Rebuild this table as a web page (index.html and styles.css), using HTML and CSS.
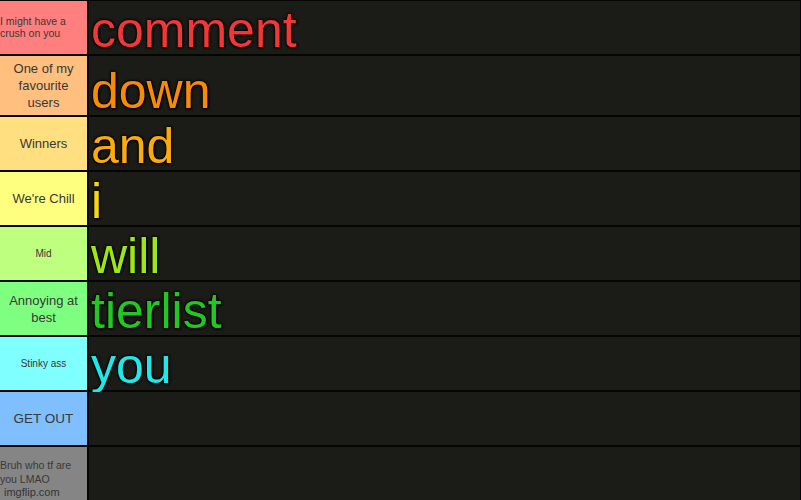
FILE: index.html
```html
<!DOCTYPE html>
<html>
<head>
<meta charset="utf-8">
<link rel="stylesheet" href="styles.css">
</head>
<body>
<div class="board">
  <div class="tier">
    <div class="label left t-s c1">I might have a crush on you</div>
    <div class="items"><span class="word w1">comment</span></div>
  </div>
  <div class="tier tall">
    <div class="label c2">One of my favourite users</div>
    <div class="items"><span class="word w2">down</span></div>
  </div>
  <div class="tier">
    <div class="label c3">Winners</div>
    <div class="items"><span class="word w3">and</span></div>
  </div>
  <div class="tier">
    <div class="label c4">We're Chill</div>
    <div class="items"><span class="word w4">i</span></div>
  </div>
  <div class="tier">
    <div class="label t-xs c5">Mid</div>
    <div class="items"><span class="word w5">will</span></div>
  </div>
  <div class="tier">
    <div class="label c6">Annoying at best</div>
    <div class="items"><span class="word w6">tierlist</span></div>
  </div>
  <div class="tier">
    <div class="label t-xs c7">Stinky ass</div>
    <div class="items"><span class="word w7">you</span></div>
  </div>
  <div class="tier">
    <div class="label t-l c8">GET OUT</div>
    <div class="items"></div>
  </div>
  <div class="tier">
    <div class="label left t-b c9">Bruh who tf are you LMAO</div>
    <div class="items"></div>
  </div>
  <div class="watermark">imgflip.com</div>
</div>
</body>
</html>
```

FILE: styles.css
```css
html, body {
  margin: 0;
  padding: 0;
  background: #000;
}

.board {
  position: relative;
  width: 801px;
  height: 500px;
  box-sizing: border-box;
  padding: 1px 1px 0 0;
  display: flex;
  flex-direction: column;
  gap: 2px;
  background: #050505;
  font-family: "Liberation Sans", Arial, sans-serif;
  overflow: hidden;
}

.tier {
  display: flex;
  gap: 2px;
  height: 53px;
  flex: none;
}

.tier.tall {
  height: 59px;
}

.label {
  width: 87px;
  flex: none;
  display: flex;
  align-items: center;
  justify-content: center;
  text-align: center;
  color: #383838;
  font-size: 13px;
  line-height: 17px;
  box-sizing: border-box;
  padding: 0 2px;
}

.label.left {
  justify-content: flex-start;
  text-align: left;
  padding: 0;
}

.label.t-s {
  font-size: 10.5px;
  line-height: 11.6px;
}

.label.t-xs {
  font-size: 10px;
  line-height: 12px;
}

.label.t-l {
  font-size: 13.5px;
}

.label.t-b {
  font-size: 10.5px;
  line-height: 13.6px;
  padding-bottom: 1px;
}

.c1 { background: #ff7f7f; }
.c2 { background: #ffbf7f; }
.c3 { background: #ffdf7f; }
.c4 { background: #ffff7f; }
.c5 { background: #bfff7f; }
.c6 { background: #7fff7f; }
.c7 { background: #7fffff; }
.c8 { background: #7fbfff; }
.c9 { background: #858585; }

.items {
  flex: 1;
  background: #1b1b17;
  display: flex;
  align-items: flex-end;
  padding-left: 2px;
}

.word {
  font-size: 50px;
  line-height: 48px;
  text-shadow: 0 0 3px #000, 0 0 3px #000, 1px 1px 2px #000;
}

.w1 { color: #f33636; }
.w2 { color: #f98a06; }
.w3 { color: #fdab0a; }
.w4 { color: #f7d80c; }
.w5 { color: #9de812; }
.w6 { color: #22c822; }
.w7 { color: #1ee8e8; }

.watermark {
  position: absolute;
  left: 4px;
  bottom: 1px;
  font-size: 11px;
  line-height: 13px;
  color: #333;
}
```
